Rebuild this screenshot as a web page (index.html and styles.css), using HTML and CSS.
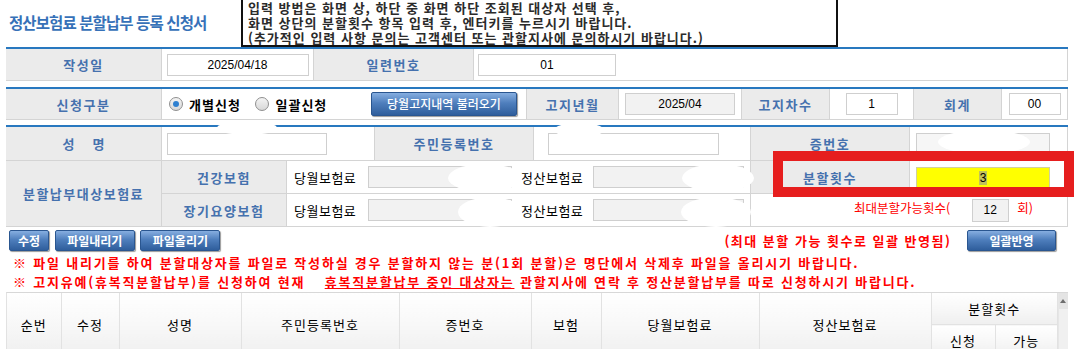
FILE: index.html
```html
<!DOCTYPE html>
<html lang="ko">
<head>
    <meta charset="UTF-8">
    <title>정산보험료 분할납부 등록 신청서</title>
    <link rel="stylesheet" href="styles.css">
</head>
<body>
<div class="page">

    <div class="top">
        <h1 class="title">정산보험료 분할납부 등록 신청서</h1>
        <div class="guide">
            <div>입력 방법은 화면 상, 하단 중 화면 하단 조회된 대상자 선택 후,</div>
            <div>화면 상단의 분할횟수 항목 입력 후, 엔터키를 누르시기 바랍니다.</div>
            <div>(추가적인 입력 사항 문의는 고객센터 또는 관할지사에 문의하시기 바랍니다.)</div>
        </div>
    </div>

    <div class="sec">
        <table class="form">
            <colgroup><col class="w156"><col class="w152"><col class="w160"><col></colgroup>
            <tr class="h32">
                <th>작성일</th>
                <td class="ctr"><span class="box w142">2025/04/18</span></td>
                <th>일련번호</th>
                <td><span class="box w138 ml4">01</span></td>
            </tr>
        </table>
    </div>

    <div class="sec">
        <table class="form">
            <colgroup><col class="w156"><col class="w365"><col class="w92"><col class="w123"><col class="w88"><col class="w84"><col class="w88"><col></colgroup>
            <tr class="h31">
                <th>신청구분</th>
                <td class="opt">
                    <span class="radio on"></span><b>개별신청</b>
                    <span class="radio"></span><b>일괄신청</b>
                    <span class="btn big">당월고지내역 불러오기</span>
                </td>
                <th>고지년월</th>
                <td class="ctr"><span class="box gray w110">2025/04</span></td>
                <th>고지차수</th>
                <td class="ctr"><span class="box w52">1</span></td>
                <th>회계</th>
                <td class="ctr"><span class="box w52">00</span></td>
            </tr>
        </table>
    </div>

    <div class="sec sec3">
        <table class="form">
            <colgroup><col class="w156"><col class="w125"><col class="w88"><col class="w159"><col class="w217"><col class="w159"><col></colgroup>
            <tr class="h34">
                <th class="wide">성&nbsp;&nbsp;&nbsp;&nbsp;&nbsp;명</th>
                <td colspan="2"><span class="box w160 ml5"></span></td>
                <th>주민등록번호</th>
                <td><span class="box w171 ml14"></span></td>
                <th>증번호</th>
                <td><span class="box gray2 w134 ml6"></span></td>
            </tr>
            <tr class="h33">
                <th rowspan="2">분할납부대상보험료</th>
                <th>건강보험</th>
                <td colspan="3" class="amt">
                    <span class="lbl">당월보험료</span><span class="box gray w144"></span><span class="lbl l2">정산보험료</span><span class="box gray w151"></span>
                </td>
                <th>분할횟수</th>
                <td><span class="box yellow w134 ml6"><span class="sel">3</span></span></td>
            </tr>
            <tr class="h33">
                <th>장기요양보험</th>
                <td colspan="3" class="amt">
                    <span class="lbl">당월보험료</span><span class="box gray w144"></span><span class="lbl l2">정산보험료</span><span class="box gray w151"></span>
                </td>
                <td colspan="2" class="max">최대분할가능횟수( <span class="box gray w37">12</span> 회)</td>
            </tr>
        </table>

        <span class="blob b1"></span>
        <span class="blob b2"></span>
        <span class="blob b3"></span>
        <span class="blob b4"></span>
        <span class="blob b5"></span>
        <span class="blob b6"></span>
        <span class="blob b7"></span>
        <div class="mark"></div>
    </div>

    <div class="tools">
        <div class="left">
            <span class="btn">수정</span>
            <span class="btn w80">파일내리기</span>
            <span class="btn w80">파일올리기</span>
        </div>
        <div class="right">
            <span class="note">(최대 분할 가능 횟수로 일괄 반영됨)</span>
            <span class="btn w89">일괄반영</span>
        </div>
    </div>

    <div class="notice">
        <p>※ 파일 내리기를 하여 분할대상자를 파일로 작성하실 경우 분할하지 않는 분(1회 분할)은 명단에서 삭제후 파일을 올리시기 바랍니다.</p>
        <p>※ 고지유예(휴복직분할납부)를 신청하여 현재 <u>휴복직분할납부 중인 대상자는</u> 관할지사에 연락 후 정산분할납부를 따로 신청하시기 바랍니다.</p>
    </div>

    <div class="grid">
        <table class="list">
            <colgroup><col class="w54"><col class="w58"><col class="w122"><col class="w158"><col class="w132"><col class="w70"><col class="w158"><col class="w172"><col class="w64"><col></colgroup>
            <thead>
                <tr>
                    <th rowspan="2">순번</th>
                    <th rowspan="2">수정</th>
                    <th rowspan="2">성명</th>
                    <th rowspan="2">주민등록번호</th>
                    <th rowspan="2">증번호</th>
                    <th rowspan="2">보험</th>
                    <th rowspan="2">당월보험료</th>
                    <th rowspan="2">정산보험료</th>
                    <th colspan="2" class="sub">분할횟수</th>
                </tr>
                <tr>
                    <th class="sub">신청</th>
                    <th class="sub">가능</th>
                </tr>
            </thead>
        </table>
        <div class="scroll"><span class="up"></span></div>
    </div>

</div>
</body>
</html>
```

FILE: styles.css
```css
body{margin:0;background:#fff;font-family:"Noto Sans CJK KR","Noto Sans",sans-serif;font-size:13px;color:#000;}
.page{padding-left:6px;width:1062px;}

/* title + guide */
.top{display:flex;height:47px;align-items:flex-start;}
.title{margin:0;padding:12px 0 0 3px;width:232px;font-size:15.5px;font-weight:700;line-height:20px;color:#3671b8;letter-spacing:-0.9px;white-space:nowrap;}
.guide{margin-top:-2px;border:2px solid #111;width:597px;padding:0 0 0 5px;box-sizing:border-box;font-size:13px;color:#2b2b2b;font-weight:700;letter-spacing:1px;word-spacing:0;white-space:nowrap;}
.guide div{height:15px;line-height:15px;overflow:visible;}

/* form blocks */
.sec{border-top:2px solid #2878bf;margin-top:6px;}
.top + .sec{margin-top:0;}
.sec3{position:relative;margin-top:5px;}
.form{width:1062px;table-layout:fixed;border-collapse:separate;border-spacing:0;}
.form th, .form td{padding:0;border-right:1px solid #d4d4d4;border-bottom:1px solid #d4d4d4;box-sizing:border-box;white-space:nowrap;}
.form th{background:#ebebeb;color:#4571ae;font-weight:700;font-size:13px;letter-spacing:1.5px;text-align:center;}
.form th.wide{letter-spacing:0;}
.h32 > *{height:32px;}
.h31 > *{height:31px;}
.h34 > *{height:34px;}
.h33 > *{height:33px;}
.ctr{text-align:center;}

.w156{width:156px;}.w152{width:152px;}.w160{width:160px;}.w365{width:365px;}.w92{width:92px;}
.w123{width:123px;}.w88{width:88px;}.w84{width:84px;}.w125{width:125px;}.w159{width:159px;}.w217{width:217px;}
.w54{width:54px;}.w58{width:58px;}.w122{width:122px;}.w158{width:158px;}.w132{width:132px;}.w70{width:70px;}
.w172{width:172px;}.w64{width:64px;}

.box{display:inline-block;vertical-align:middle;height:22px;line-height:20px;border:1px solid #cfcfcf;background:#fff;box-sizing:border-box;text-align:center;font-size:12px;color:#000;font-family:"Liberation Sans",Arial,sans-serif;letter-spacing:0;}
.box.w142{width:142px;}.box.w138{width:138px;}.box.w110{width:110px;}.box.w52{width:52px;}.box.w160{width:160px;}
.box.w171{width:171px;}.box.w134{width:134px;}.box.w144{width:144px;}.box.w151{width:151px;}.box.w37{width:37px;height:23px;}
.box.gray{background:#f2f2f2;}
.box.gray2{background:#f6f6f6;}
.box.yellow{background:#ffff00;border-color:#d0d0a0;height:21px;}
.sel{background:#c2c25a;padding:0 1px;}
.ml4{margin-left:4px;}.ml5{margin-left:5px;}.ml6{margin-left:6px;}.ml14{margin-left:14px;}

/* radios and buttons */
.opt{padding-left:7px !important;}
.opt b{font-size:13px;letter-spacing:1px;margin-right:11px;vertical-align:middle;}
.radio{display:inline-block;vertical-align:middle;width:12px;height:12px;border-radius:50%;border:1px solid #8f8f8f;background:linear-gradient(#f4f4f4,#d8d8d8);margin-right:6px;position:relative;}
.radio.on::after{content:"";position:absolute;left:3px;top:3px;width:6px;height:6px;border-radius:50%;background:#2f80d0;}
.btn{display:inline-block;vertical-align:middle;height:21px;line-height:20px;padding:0 8px;box-sizing:border-box;color:#fff;font-size:12px;font-weight:700;text-align:center;border:1px solid #2a5690;border-radius:2px;background:linear-gradient(#86aee0,#4f7fbd 45%,#2f5e9c);box-shadow:1px 1px 1px #9a9a9a;}
.btn.big{height:24px;line-height:22px;width:146px;margin-left:29px;font-weight:500;}
.btn.w80{width:80px;}
.btn.w89{width:89px;}

/* amounts */
.amt{padding-left:7px !important;}
.lbl{display:inline-block;vertical-align:middle;width:74px;font-size:13px;letter-spacing:0.5px;}
.lbl.l2{width:72px;margin-left:9px;}
.max{border-left:0;text-align:right;padding-right:34px !important;color:#ff0000;font-size:12.5px;letter-spacing:0;}
.max .box{margin:0 5px 0 18px;}

/* overlays */
.mark{position:absolute;left:767px;top:24px;width:301px;height:46px;border:10px solid #e61e1e;box-sizing:border-box;}
.blob{position:absolute;background:#fff;border-radius:50%;}
.b1{left:211px;top:-6px;width:60px;height:14px;}
.b2{left:548px;top:-4px;width:50px;height:14px;}
.b3{left:932px;top:3px;width:92px;height:24px;}
.b4{left:442px;top:37px;width:74px;height:28px;}
.b5{left:676px;top:37px;width:72px;height:28px;}
.b6{left:452px;top:70px;width:64px;height:30px;}
.b7{left:675px;top:70px;width:70px;height:30px;}

/* toolbar */
.tools{display:flex;justify-content:space-between;align-items:center;margin-top:2px;height:22px;padding:0 12px 0 3px;}
.tools .left .btn{margin-right:2px;}
.note{color:#ff0000;font-weight:700;font-size:13px;letter-spacing:1.5px;margin-right:12px;vertical-align:middle;}

.notice{padding-left:7px;margin-top:2px;}
.notice p{margin:0;color:#ff0000;font-weight:700;font-size:13px;line-height:19px;letter-spacing:1.8px;white-space:nowrap;}
.notice u{margin-left:14px;}

/* list header */
.grid{display:flex;margin-top:1px;border-top:1px solid #d8d8d8;border-left:1px solid #e2e2e2;}
.list{width:1052px;table-layout:fixed;border-collapse:collapse;}
.list th{height:62px;font-weight:400;font-size:13px;letter-spacing:1px;background:linear-gradient(#fff,#f6f6f6 60%,#efefef);border-right:1px solid #e2e2e2;border-bottom:1px solid #e2e2e2;padding:0;}
.list th.sub{height:31px;}
.scroll{width:9px;height:62px;background:#f0f0f0;border-left:1px solid #e6e6e6;}
.up{display:block;width:9px;height:16px;background:#e4e4e4;position:relative;}
.up::after{content:"";position:absolute;left:1px;top:6px;border-left:3.5px solid transparent;border-right:3.5px solid transparent;border-bottom:4px solid #6d6d6d;}
```
